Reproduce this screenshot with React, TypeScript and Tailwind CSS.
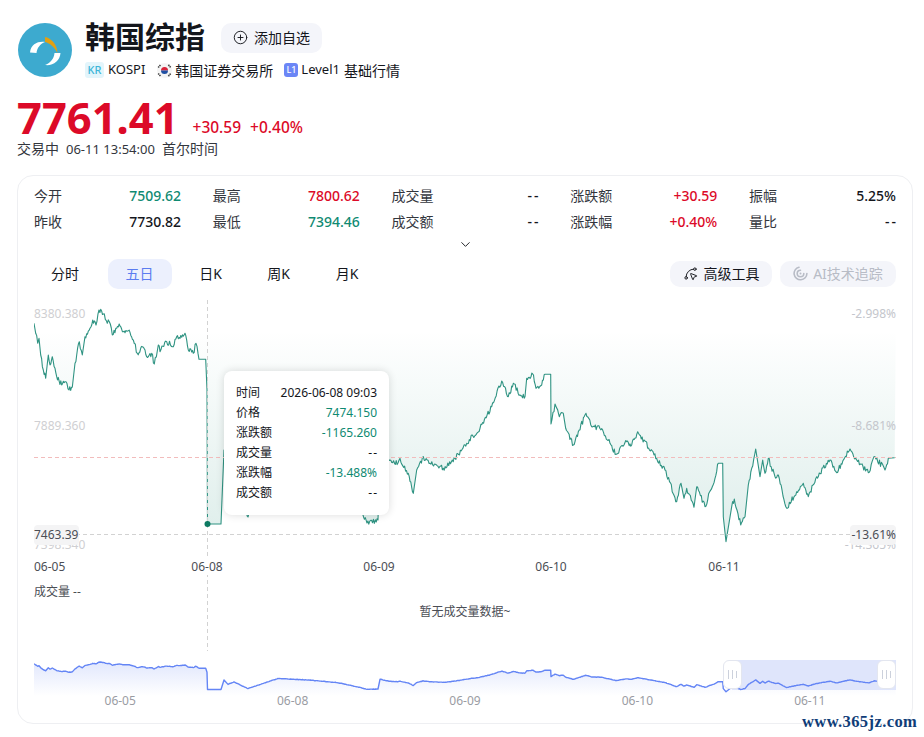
import { ChevronDown, CirclePlus, SplinePointer } from "lucide-react";

const sans = "font-['Noto_Sans','Noto_Sans_CJK_SC',sans-serif]";

type Pt = [number, number];

// traced from the chart, in page coordinates
const leftPart: Pt[] = [
  [42, 70], [47, 100], [53, 130], [57, 115], [62, 165], [70, 210], [77, 235], [85, 165], [90, 195], [97, 170],
  [105, 205], [110, 230], [125, 255], [135, 245], [147, 270], [157, 262], [165, 190], [178, 125], [187, 165],
  [195, 110], [210, 85], [218, 60], [228, 75], [237, 30], [250, 42], [262, 70], [268, 65], [277, 105], [290, 85],
  [300, 78], [310, 95], [325, 92], [340, 120], [352, 160], [362, 145], [375, 150], [380, 170], [395, 160],
  [403, 192], [415, 135], [420, 155], [440, 125], [460, 140], [470, 110], [480, 115], [495, 100], [505, 150],
  [520, 160], [528, 130], [537, 178], [557, 178],
].map(([x, y]) => [x / 3 + 20, y / 3 + 300] as Pt);

const midPart: Pt[] = [
  [207, 390], [207.5, 524], [221, 524], [224, 450], [228, 484], [234, 465], [248, 517], [278, 438], [308, 450],
  [337, 470], [361, 510], [367, 523], [378, 520], [380, 445], [390, 460], [398, 463],
];

const rightPart: Pt[] = [
  [0, 475], [25, 520], [40, 580], [50, 510], [70, 470], [90, 490], [130, 505], [165, 475], [200, 430], [240, 385],
  [275, 320], [305, 243], [325, 290], [340, 250], [360, 285], [375, 290], [380, 235], [398, 222], [408, 265],
  [425, 255], [435, 223], [452, 223], [453, 372], [465, 312], [478, 350], [490, 340], [497, 385], [520, 435],
  [535, 395], [558, 340], [575, 380], [605, 386], [630, 430], [648, 463], [680, 425], [695, 435], [713, 395],
  [770, 475], [795, 510], [830, 605], [843, 550], [852, 595], [860, 565], [882, 622], [890, 560], [915, 620],
  [945, 535], [955, 490], [968, 490], [970, 650], [978, 725], [995, 620], [1003, 597], [1022, 675], [1035, 650],
  [1045, 555], [1055, 505], [1067, 447], [1080, 530], [1088, 480], [1095, 520], [1105, 475], [1125, 530],
  [1135, 525], [1160, 625], [1190, 575], [1210, 550], [1225, 590], [1250, 530], [1290, 480], [1310, 518],
  [1350, 447], [1370, 480], [1405, 518], [1425, 470], [1455, 510], [1465, 475], [1484, 473],
].map(([x, y]) => [x / 3 + 400, y / 3 + 300] as Pt);

const knots: Pt[] = [...leftPart, ...midPart, ...rightPart];

// fill in the jitter between the traced points
function buildSeries(amp: number): Pt[] {
  let seed = 17;
  const rand = () => {
    seed = (seed * 16807) % 2147483647;
    return seed / 2147483647 - 0.5;
  };
  const out: Pt[] = [];
  for (let i = 0; i < knots.length - 1; i++) {
    const [x0, y0] = knots[i];
    const [x1, y1] = knots[i + 1];
    const dx = x1 - x0;
    const flat = Math.abs(y1 - y0) < 0.8 || Math.abs(y1 - y0) / Math.max(dx, 0.1) > 6;
    const steps = flat ? 1 : Math.max(1, Math.round(dx / 0.9));
    for (let s = 0; s < steps; s++) {
      const t = s / steps;
      out.push([x0 + dx * t, y0 + (y1 - y0) * t + (s === 0 ? 0 : rand() * amp)]);
    }
  }
  out.push(knots[knots.length - 1]);
  return out;
}

const toLine = (pts: Pt[]) => pts.map(([x, y]) => `${x.toFixed(1)},${y.toFixed(1)}`).join(" ");

const mainPts = buildSeries(5.5);
const miniPts: Pt[] = buildSeries(3).map(([x, y]) => [x, 662 + (y - 310) * 0.1285]);

const stats = [
  ["今开", "7509.62", "text-[#0f8a72]"],
  ["最高", "7800.62", "text-[#dc0a28]"],
  ["成交量", "--", "text-[#14161c] tracking-[2px] -mr-[2px]"],
  ["涨跌额", "+30.59", "text-[#dc0a28]"],
  ["振幅", "5.25%", "text-[#14161c]"],
  ["昨收", "7730.82", "text-[#14161c]"],
  ["最低", "7394.46", "text-[#0f8a72]"],
  ["成交额", "--", "text-[#14161c] tracking-[2px] -mr-[2px]"],
  ["涨跌幅", "+0.40%", "text-[#dc0a28]"],
  ["量比", "--", "text-[#14161c] tracking-[2px] -mr-[2px]"],
];

const tipRows = [
  ["时间", "2026-06-08 09:03", "text-[#14161c]"],
  ["价格", "7474.150", "text-[#0f8a72]"],
  ["涨跌额", "-1165.260", "text-[#0f8a72]"],
  ["成交量", "--", "text-[#14161c] tracking-[1px] -mr-[1px]"],
  ["涨跌幅", "-13.488%", "text-[#0f8a72]"],
  ["成交额", "--", "text-[#14161c] tracking-[1px] -mr-[1px]"],
];

function Logo() {
  return (
    <svg width="54" height="54" viewBox="0 0 54 54" className="shrink-0">
      <circle cx="27" cy="27" r="27" fill="#3daacf" />
      <path d="M12 29.5C13 21 20 18 27 19C22 21 19 25 18.5 30Z" fill="#fff" />
      <path d="M27 14C33 15 39 21 39.5 30C37 25 32 20 27 19Z" fill="#e2a012" />
      <path d="M36.5 30L42.5 30C42 38 35 43 27 42C32 40 36 36 36.5 30Z" fill="#fff" />
    </svg>
  );
}

function KoreaFlag() {
  return (
    <svg width="15" height="15" viewBox="0 0 15 15" className="shrink-0">
      <circle cx="7.5" cy="7.5" r="7.5" fill="#f4f4f4" />
      <path d="M4 7.5a3.5 3.5 0 0 1 7 0Z" fill="#d8233a" />
      <path d="M4 7.5a3.5 3.5 0 0 0 7 0Z" fill="#1f4fa3" />
      <g stroke="#444" strokeWidth="1.6" strokeDasharray="1.4 0.6">
        <path d="M1.2 4.6L3.6 1.8" />
        <path d="M11.4 1.8L13.8 4.6" />
        <path d="M1.2 10.4L3.6 13.2" />
        <path d="M11.4 13.2L13.8 10.4" />
      </g>
    </svg>
  );
}

function AiIcon() {
  return (
    <svg width="15" height="15" viewBox="0 0 15 15" fill="none" stroke="#b8bcc6" strokeWidth="1.6" className="shrink-0">
      <path d="M6 1.2A6.4 6.4 0 1 0 13.9 7.5" strokeLinecap="round" />
      <path d="M7.5 4.2A3.3 3.3 0 1 0 10.8 7.5" strokeLinecap="round" />
      <circle cx="7.5" cy="7.5" r="1" fill="#b8bcc6" stroke="none" />
    </svg>
  );
}

function MainChart() {
  const line = toLine(mainPts);
  return (
    <svg viewBox="34 300 862 351" className="absolute inset-0 h-full w-full">
      <defs>
        <linearGradient id="upfill" gradientUnits="userSpaceOnUse" x1="0" y1="330" x2="0" y2="545">
          <stop offset="0" stopColor="#1d8a74" stopOpacity="0" />
          <stop offset="1" stopColor="#1d8a74" stopOpacity="0.15" />
        </linearGradient>
      </defs>
      <polygon points={`34,300 ${line} 896,300`} fill="url(#upfill)" />
      <polyline points={line} fill="none" stroke="#2f9382" strokeWidth="1.1" strokeLinejoin="round" />
      <line x1="34" x2="896" y1="457.5" y2="457.5" stroke="#f2bcbc" strokeDasharray="4 3" />
      <line x1="34" x2="896" y1="534.5" y2="534.5" stroke="#d2d2d2" strokeWidth="1" strokeDasharray="4 3" />
      <line x1="207.5" x2="207.5" y1="300" y2="651" stroke="#d2d2d2" strokeWidth="1" strokeDasharray="4 3" />
      <circle cx="207.5" cy="524" r="3" fill="#0d7a62" />
    </svg>
  );
}

function MiniChart() {
  const line = toLine(miniPts);
  return (
    <svg viewBox="34 660 862 36" className="absolute inset-0 h-full w-full">
      <defs>
        <linearGradient id="minifill" gradientUnits="userSpaceOnUse" x1="0" y1="662" x2="0" y2="696">
          <stop offset="0" stopColor="#5b7cf0" stopOpacity="0.18" />
          <stop offset="1" stopColor="#5b7cf0" stopOpacity="0" />
        </linearGradient>
      </defs>
      <polygon points={`34,696 ${line} 896,696`} fill="url(#minifill)" />
      <rect x="732" y="660" width="164" height="30" fill="#dfe5fb" />
      <polyline points={line} fill="none" stroke="#6485f5" strokeWidth="1.4" strokeLinejoin="round" />
    </svg>
  );
}

function Handle({ className }: { className: string }) {
  return (
    <div
      className={`absolute top-0 flex h-[29px] w-[19px] items-center justify-center gap-[3px] rounded-[6px] border border-[#e3e6ef] bg-white ${className}`}
    >
      <span className="h-[9px] w-px bg-[#ccd1dc]" />
      <span className="h-[9px] w-px bg-[#ccd1dc]" />
      <span className="h-[7px] w-px bg-[#ccd1dc]" />
    </div>
  );
}

export default function App() {
  return (
    <div className={`relative h-[737px] w-[924px] overflow-hidden bg-white text-[#14161c] ${sans}`}>
      <div className="flex items-start gap-[13px] pl-[18px] pt-[23px]">
        <Logo />
        <div className="flex flex-col">
          <div className="flex h-[30px] items-center gap-[16px]">
            <h1 className="mb-[2px] text-[30px] font-bold leading-[30px]">韩国综指</h1>
            <button className="flex h-[30px] w-[101px] items-center justify-center gap-[6px] rounded-[10px] bg-[#f4f5fa] pb-[1px] text-[14px]">
              <CirclePlus size={15} strokeWidth={1.5} />
              添加自选
            </button>
          </div>
          <div className="mt-[8px] flex h-[18px] items-center text-[14px]">
            <span className="mr-[4px] flex h-[16px] w-[19px] items-center justify-center rounded-[3px] bg-[#e3f5fb] text-[11px] font-medium text-[#3db5d8]">
              KR
            </span>
            <span className="text-[13px]">KOSPI</span>
            <span className="ml-[12px] mr-[3px]">
              <KoreaFlag />
            </span>
            <span>韩国证券交易所</span>
            <span className="ml-[11px] mr-[3px] flex h-[14px] w-[14px] items-center justify-center rounded-[3px] bg-[#6b86f6] text-[9px] font-medium text-white">
              L1
            </span>
            <span className="mr-[4px] text-[13px]">Level1</span>
            <span>基础行情</span>
          </div>
        </div>
      </div>

      <div className="mt-[15px] flex items-end pl-[17px]">
        <span className="text-[43.5px] font-bold leading-[46px] text-[#dc0a28]">7761.41</span>
        <span className="mb-[2px] ml-[14px] text-[15.5px] font-medium leading-[22px] text-[#dc0a28]">+30.59</span>
        <span className="mb-[2px] ml-[9px] text-[15.5px] font-medium leading-[22px] text-[#dc0a28]">+0.40%</span>
      </div>
      <div className="flex h-[18px] items-baseline gap-[7px] pl-[17px] text-[14px] leading-[18px] text-[#33363d]">
        <span>交易中</span>
        <span className="text-[13px]">06-11 13:54:00</span>
        <span>首尔时间</span>
      </div>

      <div className="ml-[17px] mt-[17px] h-[549px] w-[896px] rounded-[16px] border border-[#eeeff2] px-[16px]">
        <div className="grid grid-cols-5 gap-x-[31.75px] pt-[6px]">
          {stats.map(([label, value, color]) => (
            <div key={label} className="flex h-[26px] items-center justify-between text-[14px]">
              <span className="text-[#33363d]">{label}</span>
              <span className={`font-medium ${color}`}>{value}</span>
            </div>
          ))}
        </div>
        <div className="mt-[2px] flex h-[16px] items-center justify-center">
          <ChevronDown size={15} strokeWidth={1.5} />
        </div>

        <div className="mt-[7px] flex h-[30px] items-center">
          <div className="-ml-[1px] flex items-center gap-[10.5px] text-[14px]">
            <span className="flex h-[30px] items-center rounded-[10px] px-[18px] pb-[2px]">分时</span>
            <span className="flex h-[30px] items-center rounded-[10px] bg-[#ecf0fd] px-[18px] pb-[2px] text-[#5b7cf0]">五日</span>
            <span className="flex h-[30px] w-[57px] items-center justify-center rounded-[10px] pb-[2px]">日K</span>
            <span className="flex h-[30px] w-[58px] items-center justify-center rounded-[10px] pb-[2px]">周K</span>
            <span className="flex h-[30px] w-[58px] items-center justify-center rounded-[10px] pb-[2px]">月K</span>
          </div>
          <div className="ml-auto flex items-center gap-[8px] text-[14px]">
            <button className="flex h-[26px] w-[102px] items-center justify-center gap-[6px] rounded-[10px] bg-[#f4f5fa] pb-[1px]">
              <SplinePointer size={15} strokeWidth={1.5} />
              高级工具
            </button>
            <button className="flex h-[26px] w-[116px] items-center justify-center gap-[5px] rounded-[10px] bg-[#f4f5fa] pb-[1px] text-[#b8bcc6]">
              <AiIcon />
              AI技术追踪
            </button>
          </div>
        </div>

        <div className="relative mt-[11px] h-[351px] text-[12px] leading-[16px]">
          <MainChart />
          <span className="absolute left-0 top-[6px] text-[#cfcfd2]">8380.380</span>
          <span className="absolute left-0 top-[118px] text-[#cfcfd2]">7889.360</span>
          <span className="absolute left-0 top-[237px] text-[#cfcfd2]">7398.340</span>
          <span className="absolute right-0 top-[6px] text-[#c4c6cc]">-2.998%</span>
          <span className="absolute right-0 top-[118px] text-[#c4c6cc]">-8.681%</span>
          <span className="absolute right-0 top-[237px] text-[#c4c6cc]">-14.365%</span>
          <span className="absolute left-0 top-[225px] flex h-[20px] items-center rounded-[4px] bg-[#f4f4f5] pr-[1px] text-[#4b4e55]">7463.39</span>
          <span className="absolute right-0 top-[225px] flex h-[20px] items-center rounded-[4px] bg-[#f4f4f5] pl-[1px] text-[#4b4e55]">-13.61%</span>
          <span className="absolute left-0 top-[259px] text-[#4b4e55]">06-05</span>
          <span className="absolute left-[173px] top-[259px] -translate-x-1/2 bg-white text-[#4b4e55]">06-08</span>
          <span className="absolute left-[345px] top-[259px] -translate-x-1/2 text-[#4b4e55]">06-09</span>
          <span className="absolute left-[517px] top-[259px] -translate-x-1/2 text-[#4b4e55]">06-10</span>
          <span className="absolute left-[690px] top-[259px] -translate-x-1/2 text-[#4b4e55]">06-11</span>
          <span className="absolute left-0 top-[284px] text-[#4b4e55]">成交量 --</span>
          <span className="absolute left-[431px] top-[304px] -translate-x-1/2 text-[#4b4e55]">暂无成交量数据~</span>

          <div className="absolute left-[190px] top-[71px] flex h-[144px] w-[165px] flex-col justify-center rounded-[8px] bg-white px-[12px] shadow-[0_0_8px_rgba(0,0,0,0.14)]">
            {tipRows.map(([label, value, color]) => (
              <div key={label} className="flex h-[20px] items-center justify-between">
                <span>{label}</span>
                <span className={color}>{value}</span>
              </div>
            ))}
          </div>
        </div>

        <div className="relative mt-[9px] h-[36px]">
          <MiniChart />
          <Handle className="left-[689px]" />
          <Handle className="right-0" />
        </div>
        <div className="-mt-[3px] grid h-[16px] grid-cols-5 text-center text-[12px] leading-[16px] text-[#9a9ca3]">
          <span>06-05</span>
          <span>06-08</span>
          <span>06-09</span>
          <span>06-10</span>
          <span>06-11</span>
        </div>
      </div>

      <span className="absolute left-[802px] top-[712px] font-['Liberation_Serif',serif] text-[16.5px] font-bold leading-[20px] tracking-[0.4px] text-[#0f3d78]">
        www.365jz.com
      </span>
    </div>
  );
}
